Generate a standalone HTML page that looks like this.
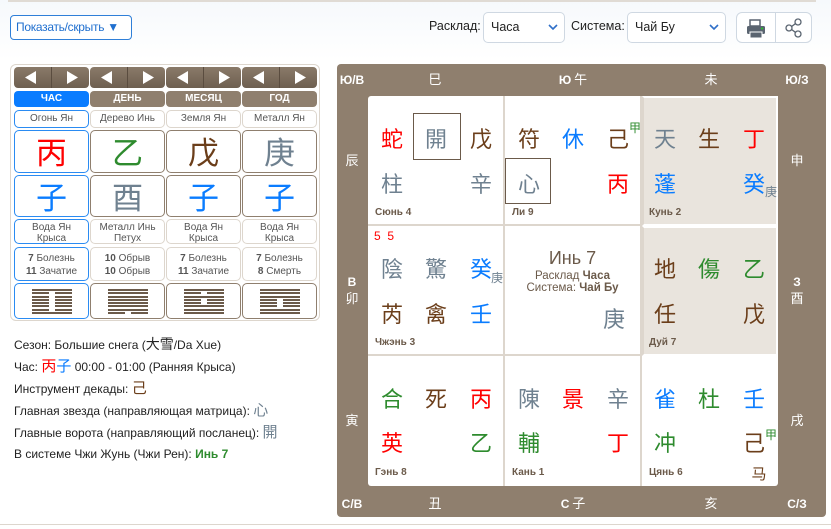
<!DOCTYPE html>
<html><head><meta charset="utf-8">
<style>
*{margin:0;padding:0;box-sizing:border-box}
body{width:831px;height:529px;overflow:hidden;background:#fff;font-family:"Liberation Sans","Noto Sans CJK SC",sans-serif;position:relative;color:#333}
.a{position:absolute}
.topbar{left:0;top:0;width:831px;height:529px;background:linear-gradient(#f6f9fc,#fff 60px)}
.btn1{left:10px;top:15px;width:122px;height:25px;border:1px solid #2f7fd8;border-radius:4px;background:#fff;color:#1f6fcf;font-size:12px;line-height:23px;padding-left:5px;white-space:nowrap;letter-spacing:-0.3px}
.lbl{font-size:12.5px;color:#222;top:19px}
.sel{top:12px;height:31px;border:1px solid #cfd8e2;border-radius:5px;background:#fff;font-size:12.5px;line-height:29px;padding-left:7px;color:#222}
.sel svg{position:absolute;right:6px;top:11px}
.ib{top:12px;height:31px;border:1px solid #cfd8e2;background:#fff}
.lp{left:10px;top:64px;width:310px;height:257px;border:1px solid #ddd6cd;border-radius:6px;background:#fff}
.arr{height:21px;width:75px;top:67px;background:linear-gradient(#8a7a69,#6e5f50);border-radius:4px}
.tab{top:91px;width:75px;height:16px;border-radius:4px;background:#8f7f6e;color:#fff;font-weight:bold;font-size:10px;text-align:center;line-height:16px}
.box{width:75px;border:1px solid #8f7f6e;border-radius:5px;text-align:center;background:#fff}
.lt{border-color:#ddd6cd}
.bl{border-color:#2a8bf2}
.sm{font-size:10px;color:#555;line-height:11px}
.big{font-family:"Noto Sans CJK SC",sans-serif;font-size:31px;line-height:40px}
.hex{position:absolute;left:50%;margin-left:-20px;width:40px}
.hex i{display:block;height:2px;margin-bottom:1.3px;background:#6b5a4a;position:relative}
.hex i.b::after{content:"";position:absolute;left:17px;width:6px;height:2px;background:#fff}
.info{left:14px;font-size:12px;color:#222;height:18px;line-height:18px;white-space:nowrap}
.info span{line-height:16px;display:inline-block;vertical-align:top}
.frame{left:337px;top:64px;width:489px;height:453px;background:#8f7f6e;border-radius:4px}
.fl{color:#fff;font-size:13px;font-family:"Noto Sans CJK SC",sans-serif;text-align:center;width:40px;margin-left:-20px;line-height:16px}
.fb{font-family:"Liberation Sans",sans-serif;font-weight:bold;font-size:12px}
.grid{left:368px;top:96px;width:410px;height:390px;background:#fff;border-radius:3px}
.cell{position:absolute;width:137px;height:130px;border-right:2px solid #ddd6cd;border-bottom:2px solid #ddd6cd}
.sh{background:#e9e4dd;border:2px solid #fff;border-left-color:#ddd6cd}
.c{position:absolute;font-family:"Noto Sans CJK SC",sans-serif;font-size:22px;width:30px;margin-left:-15px;text-align:center;line-height:26px;margin-top:-13px}
.cl{position:absolute;left:7px;top:111px;font-size:10px;font-weight:bold;color:#6b5a4a}
.R{color:#f00}.G{color:#2e8b2e}.B{color:#6b3e1a}.Y{color:#6f8190}.U{color:#0a7cff}
.sup{position:absolute;font-family:"Noto Sans CJK SC",sans-serif;font-size:12px}
.bx{position:absolute;border:1px solid #6b5a4a}
</style></head><body>
<div class="a topbar"></div>
<div class="a" style="left:8px;top:0;width:808px;height:2px;background:#e0dbd4"></div>
<div class="a btn1">Показать/скрыть <span style="font-size:12px">▼</span></div>
<div class="a lbl" style="left:429px">Расклад:</div>
<div class="a sel" style="left:483px;width:82px">Часа<svg width="10" height="7"><path d="M1 1l4 4 4-4" stroke="#2f6fc8" stroke-width="1.6" fill="none"/></svg></div>
<div class="a lbl" style="left:571px">Система:</div>
<div class="a sel" style="left:627px;width:99px">Чай Бу<svg width="10" height="7"><path d="M1 1l4 4 4-4" stroke="#2f6fc8" stroke-width="1.6" fill="none"/></svg></div>
<div class="a ib" style="left:736px;width:40px;border-radius:6px 0 0 6px"><svg width="40" height="31"><rect x="13" y="7" width="10" height="6" fill="#fff" stroke="#5a6470" stroke-width="1.5"/><rect x="10" y="13" width="18" height="8" rx="1.5" fill="#5a6470"/><rect x="13" y="19" width="12" height="6" fill="#5a6470" stroke="#fff" stroke-width="1"/><circle cx="25" cy="15.5" r="1" fill="#2c2"/></svg></div>
<div class="a ib" style="left:775px;width:37px;border-radius:0 6px 6px 0"><svg width="37" height="31"><circle cx="22" cy="9" r="3" fill="none" stroke="#5a6470" stroke-width="1.3"/><circle cx="13" cy="15" r="3" fill="none" stroke="#5a6470" stroke-width="1.3"/><circle cx="22" cy="21" r="3" fill="none" stroke="#5a6470" stroke-width="1.3"/><path d="M15.6 13.5l3.8-2.8M15.6 16.5l3.8 2.8" stroke="#5a6470" stroke-width="1.3"/></svg></div>

<div class="a lp"></div>
<div class="a arr" style="left:14px"><svg width="75" height="21" style="position:absolute"><path d="M37.5 0v21" stroke="#5a4c3f"/><path d="M22 4v13l-11-6.5z" fill="#fff"/><path d="M53 4v13l11-6.5z" fill="#fff"/></svg></div>
<div class="a arr" style="left:90px"><svg width="75" height="21" style="position:absolute"><path d="M37.5 0v21" stroke="#5a4c3f"/><path d="M22 4v13l-11-6.5z" fill="#fff"/><path d="M53 4v13l11-6.5z" fill="#fff"/></svg></div>
<div class="a arr" style="left:166px"><svg width="75" height="21" style="position:absolute"><path d="M37.5 0v21" stroke="#5a4c3f"/><path d="M22 4v13l-11-6.5z" fill="#fff"/><path d="M53 4v13l11-6.5z" fill="#fff"/></svg></div>
<div class="a arr" style="left:242px"><svg width="75" height="21" style="position:absolute"><path d="M37.5 0v21" stroke="#5a4c3f"/><path d="M22 4v13l-11-6.5z" fill="#fff"/><path d="M53 4v13l11-6.5z" fill="#fff"/></svg></div>
<div class="a tab" style="left:14px;background:#0a7cff">ЧАС</div>
<div class="a tab" style="left:90px">ДЕНЬ</div>
<div class="a tab" style="left:166px">МЕСЯЦ</div>
<div class="a tab" style="left:242px">ГОД</div>

<div class="a box bl sm" style="left:14px;top:110px;height:18px;line-height:16px">Огонь Ян</div>
<div class="a box lt sm" style="left:90px;top:110px;height:18px;line-height:16px">Дерево Инь</div>
<div class="a box lt sm" style="left:166px;top:110px;height:18px;line-height:16px">Земля Ян</div>
<div class="a box lt sm" style="left:242px;top:110px;height:18px;line-height:16px">Металл Ян</div>

<div class="a box bl big R" style="left:14px;top:130px;height:43px">丙</div>
<div class="a box big G" style="left:90px;top:130px;height:43px">乙</div>
<div class="a box big B" style="left:166px;top:130px;height:43px">戊</div>
<div class="a box big Y" style="left:242px;top:130px;height:43px">庚</div>

<div class="a box bl big U" style="left:14px;top:175px;height:42px">子</div>
<div class="a box big Y" style="left:90px;top:175px;height:42px">酉</div>
<div class="a box big U" style="left:166px;top:175px;height:42px">子</div>
<div class="a box big U" style="left:242px;top:175px;height:42px">子</div>

<div class="a box bl sm" style="left:14px;top:219px;height:25px;padding-top:2px">Вода Ян<br>Крыса</div>
<div class="a box lt sm" style="left:90px;top:219px;height:25px;padding-top:2px">Металл Инь<br>Петух</div>
<div class="a box lt sm" style="left:166px;top:219px;height:25px;padding-top:2px">Вода Ян<br>Крыса</div>
<div class="a box lt sm" style="left:242px;top:219px;height:25px;padding-top:2px">Вода Ян<br>Крыса</div>

<div class="a box bl sm" style="left:14px;top:247px;height:34px;padding-top:4px;line-height:13px"><b>7</b> Болезнь<br><b>11</b> Зачатие</div>
<div class="a box lt sm" style="left:90px;top:247px;height:34px;padding-top:4px;line-height:13px"><b>10</b> Обрыв<br><b>10</b> Обрыв</div>
<div class="a box lt sm" style="left:166px;top:247px;height:34px;padding-top:4px;line-height:13px"><b>7</b> Болезнь<br><b>11</b> Зачатие</div>
<div class="a box lt sm" style="left:242px;top:247px;height:34px;padding-top:4px;line-height:13px"><b>7</b> Болезнь<br><b>8</b> Смерть</div>

<div class="a box bl" style="left:14px;top:283px;height:36px"><div class="hex" style="top:5px"><i></i><i class="b"></i><i class="b"></i><i class="b"></i><i class="b"></i><i class="b"></i><i class="b"></i><i></i></div></div>
<div class="a box" style="left:90px;top:283px;height:36px"><div class="hex" style="top:5px"><i></i><i></i><i></i><i></i><i></i><i></i><i></i><i class="b"></i></div></div>
<div class="a box" style="left:166px;top:283px;height:36px"><div class="hex" style="top:5px"><i></i><i class="b"></i><i></i><i class="b"></i><i class="b"></i><i></i><i></i><i></i></div></div>
<div class="a box" style="left:242px;top:283px;height:36px"><div class="hex" style="top:5px"><i></i><i></i><i></i><i class="b"></i><i class="b"></i><i class="b"></i><i></i><i></i></div></div>

<div class="a info" style="top:336px">Сезон: Большие снега (<span style="font-family:'Noto Sans CJK SC';font-size:14px">大雪</span>/Da Xue)</div>
<div class="a info" style="top:358px">Час: <span class="R" style="font-family:'Noto Sans CJK SC';font-size:15px">丙</span><span class="U" style="font-family:'Noto Sans CJK SC';font-size:15px">子</span> 00:00 - 01:00 (Ранняя Крыса)</div>
<div class="a info" style="top:380px">Инструмент декады: <span class="B" style="font-family:'Noto Sans CJK SC';font-size:15px">己</span></div>
<div class="a info" style="top:402px">Главная звезда (направляющая матрица): <span class="Y" style="font-family:'Noto Sans CJK SC';font-size:15px">心</span></div>
<div class="a info" style="top:424px">Главные ворота (направляющий посланец): <span class="Y" style="font-family:'Noto Sans CJK SC';font-size:15px">開</span></div>
<div class="a info" style="top:445px">В системе Чжи Жунь (Чжи Рен): <b class="G">Инь 7</b></div>

<div class="a frame"></div>
<div class="a fl fb" style="left:352px;top:72px">Ю/В</div>
<div class="a fl" style="left:435px;top:71px">巳</div>
<div class="a fl" style="left:573px;top:71px"><span class="fb">Ю</span> 午</div>
<div class="a fl" style="left:711px;top:71px">未</div>
<div class="a fl fb" style="left:797px;top:72px">Ю/З</div>
<div class="a fl" style="left:352px;top:152px">辰</div>
<div class="a fl" style="left:352px;top:273px"><span class="fb">В</span><br>卯</div>
<div class="a fl" style="left:352px;top:412px">寅</div>
<div class="a fl" style="left:797px;top:152px">申</div>
<div class="a fl" style="left:797px;top:273px"><span class="fb">З</span><br>酉</div>
<div class="a fl" style="left:797px;top:412px">戌</div>
<div class="a fl fb" style="left:352px;top:496px">С/В</div>
<div class="a fl" style="left:435px;top:495px">丑</div>
<div class="a fl" style="left:573px;top:495px"><span class="fb">С</span> 子</div>
<div class="a fl" style="left:711px;top:495px">亥</div>
<div class="a fl fb" style="left:797px;top:496px">С/З</div>

<div class="a grid">
 <div class="cell" style="left:0;top:0">
  <div class="bx" style="left:45px;top:17px;width:48px;height:47px"></div>
  <div class="c R" style="left:24px;top:42px">蛇</div><div class="c Y" style="left:68px;top:42px">開</div><div class="c B" style="left:113px;top:42px">戊</div>
  <div class="c Y" style="left:24px;top:87px">柱</div><div class="c Y" style="left:113px;top:87px">辛</div>
  <div class="cl">Сюнь 4</div></div>
 <div class="cell" style="left:137px;top:0">
  <div class="bx" style="left:0;top:62px;width:46px;height:46px"></div>
  <div class="c B" style="left:24px;top:42px">符</div><div class="c U" style="left:68px;top:42px">休</div><div class="c B" style="left:113px;top:42px">己</div>
  <div class="sup G" style="left:124px;top:23px">甲</div>
  <div class="c Y" style="left:24px;top:87px">心</div><div class="c R" style="left:113px;top:87px">丙</div>
  <div class="cl" style="left:7px">Ли 9</div></div>
 <div class="cell sh" style="left:274px;top:0;width:136px">
  <div class="c Y" style="left:21px;top:40px">天</div><div class="c B" style="left:65px;top:40px">生</div><div class="c R" style="left:110px;top:40px">丁</div>
  <div class="c U" style="left:21px;top:85px">蓬</div><div class="c U" style="left:110px;top:85px">癸</div>
  <div class="sup Y" style="left:121px;top:85px">庚</div>
  <div class="cl" style="left:5px;top:109px">Кунь 2</div></div>
 <div class="cell" style="left:0;top:130px">
  <div class="a R" style="left:6px;top:3px;font-size:12px">5&nbsp;&nbsp;5</div>
  <div class="c Y" style="left:24px;top:42px">陰</div><div class="c Y" style="left:68px;top:42px">驚</div><div class="c U" style="left:113px;top:42px">癸</div>
  <div class="sup Y" style="left:123px;top:43px">庚</div>
  <div class="c B" style="left:24px;top:87px">芮</div><div class="c B" style="left:68px;top:87px">禽</div><div class="c U" style="left:113px;top:87px">壬</div>
  <div class="cl">Чжэнь 3</div></div>
 <div class="cell" style="left:137px;top:130px">
  <div class="a" style="left:0;width:135px;top:22px;text-align:center;color:#6b5a4a;font-size:18px">Инь 7</div>
  <div class="a" style="left:0;width:135px;top:44px;text-align:center;color:#6b5a4a;font-size:11.5px;line-height:12px">Расклад <b>Часа</b><br>Система: <b>Чай Бу</b></div>
  <div class="c Y" style="left:109px;top:92px">庚</div></div>
 <div class="cell sh" style="left:274px;top:130px;width:136px">
  <div class="c B" style="left:21px;top:40px">地</div><div class="c G" style="left:65px;top:40px">傷</div><div class="c G" style="left:110px;top:40px">乙</div>
  <div class="c B" style="left:21px;top:85px">任</div><div class="c B" style="left:110px;top:85px">戊</div>
  <div class="cl" style="left:5px;top:109px">Дуй 7</div></div>
 <div class="cell" style="left:0;top:260px;border-bottom:none">
  <div class="c G" style="left:24px;top:42px">合</div><div class="c B" style="left:68px;top:42px">死</div><div class="c R" style="left:113px;top:42px">丙</div>
  <div class="c R" style="left:24px;top:86px">英</div><div class="c G" style="left:113px;top:86px">乙</div>
  <div class="cl">Гэнь 8</div></div>
 <div class="cell" style="left:137px;top:260px;border-bottom:none">
  <div class="c Y" style="left:24px;top:42px">陳</div><div class="c R" style="left:68px;top:42px">景</div><div class="c Y" style="left:113px;top:42px">辛</div>
  <div class="c G" style="left:24px;top:86px">輔</div><div class="c R" style="left:113px;top:86px">丁</div>
  <div class="cl">Кань 1</div></div>
 <div class="cell" style="left:274px;top:260px;border:none;width:136px">
  <div class="c U" style="left:23px;top:42px">雀</div><div class="c G" style="left:67px;top:42px">杜</div><div class="c U" style="left:112px;top:42px">壬</div>
  <div class="c G" style="left:23px;top:86px">冲</div><div class="c B" style="left:112px;top:86px">己</div>
  <div class="sup G" style="left:123px;top:70px">甲</div>
  <div class="c B" style="left:117px;top:118px;font-size:15px">马</div>
  <div class="cl">Цянь 6</div></div>
</div>
<div class="a" style="left:0;top:524px;width:831px;height:1px;background:#ddd6cd"></div>
</body></html>
